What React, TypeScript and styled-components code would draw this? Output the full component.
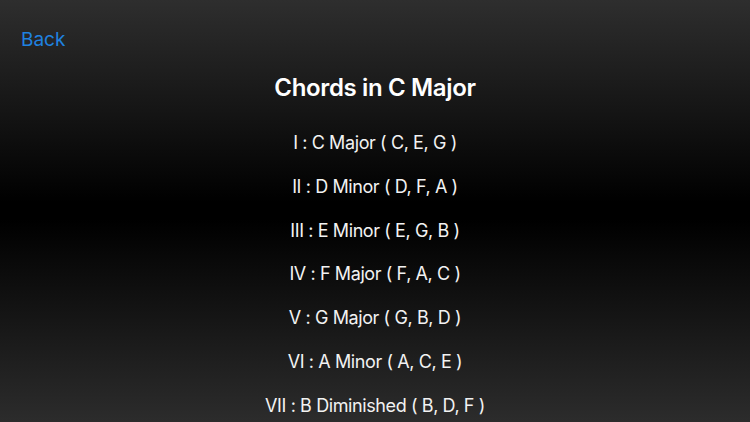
import React from "react";
import styled, { createGlobalStyle } from "styled-components";

const Global = createGlobalStyle`
  html, body { margin: 0; padding: 0; }
  body { font-family: "Inter", "Liberation Sans", sans-serif; }
`;

const Screen = styled.div`
  width: 750px;
  height: 422px;
  overflow: hidden;
  background: linear-gradient(to bottom, #2e2e2e 0%, #000 48%, #000 52%, #2c2c2c 100%);
  display: flex;
  flex-direction: column;
  & > * { flex-shrink: 0; }
`;

const TopBar = styled.div`
  height: 78px;
  display: flex;
  align-items: flex-start;
  padding: 28px 0 0 21px;
  box-sizing: border-box;
`;

const BackButton = styled.button`
  background: none;
  border: none;
  padding: 0;
  color: #1f82e0;
  font-family: inherit;
  font-size: 19px;
  line-height: 24px;
  cursor: pointer;
`;

const Title = styled.h1`
  margin: -5px 0 0;
  text-align: center;
  color: #fff;
  font-size: 24px;
  font-weight: 600;
  letter-spacing: -0.35px;
  line-height: 30px;
`;

const List = styled.div`
  margin-top: 18px;
  display: flex;
  flex-direction: column;
  align-items: center;
`;

const Row = styled.div`
  color: #f2f2f2;
  font-size: 18px;
  letter-spacing: -0.4px;
  line-height: 43.8px;
  height: 43.8px;
`;

const chords = [
  "I : C Major ( C, E, G )",
  "II : D Minor ( D, F, A )",
  "III : E Minor ( E, G, B )",
  "IV : F Major ( F, A, C )",
  "V : G Major ( G, B, D )",
  "VI : A Minor ( A, C, E )",
  "VII : B Diminished ( B, D, F )",
];

export default function App() {
  return (
    <Screen>
      <Global />
      <TopBar>
        <BackButton>Back</BackButton>
      </TopBar>
      <Title>Chords in C Major</Title>
      <List>
        {chords.map((c) => (
          <Row key={c}>{c}</Row>
        ))}
      </List>
    </Screen>
  );
}
